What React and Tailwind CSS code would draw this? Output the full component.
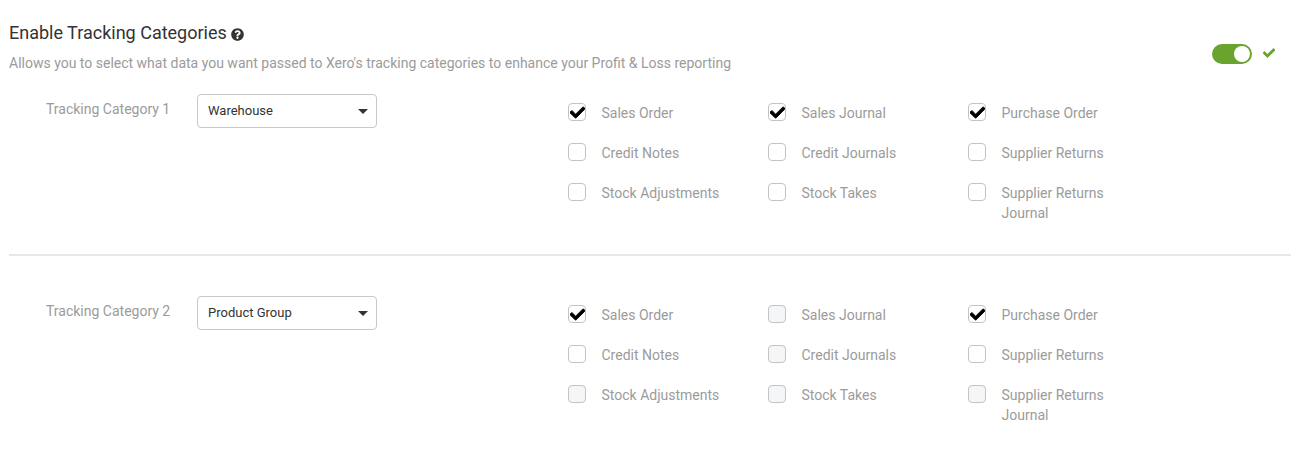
import React from "react";
import { FaCheck, FaQuestionCircle } from "react-icons/fa";

const Box = ({ checked, disabled }) => (
  <span
    className={`flex h-[18px] w-[18px] shrink-0 items-center justify-center rounded-[4px] border border-[#c4c4c4] ${
      disabled ? "bg-[#f5f6f7]" : "bg-white"
    }`}
  >
    {checked && <FaCheck className="shrink-0 stroke-[30px] text-[15px] text-black" />}
  </span>
);

const Option = ({ label, checked, disabled }) => (
  <div className="flex h-10 items-start pt-[9px]">
    <Box checked={checked} disabled={disabled} />
    <span className="ml-[15.5px] w-[120px] text-sm leading-5 text-[#9b9b9b]">{label}</span>
  </div>
);

const Category = ({ title, value, options, className }) => (
  <div className={`flex ${className}`}>
    <div className="w-[188px] pl-[37px] pt-[5px] text-sm leading-5 text-[#9b9b9b]">{title}</div>
    <div className="flex h-[34px] w-[180px] items-center justify-between rounded-[4px] border border-[#c8c8c8] pl-[10px] pr-[8px] text-[13px] text-[#333]">
      {value}
      <span className="h-0 w-0 border-x-[5px] border-t-[5px] border-x-transparent border-t-[#333]" />
    </div>
    <div className="ml-[191px] grid w-[600px] grid-cols-3">
      {options.map((o) => (
        <Option key={o.label} {...o} />
      ))}
    </div>
  </div>
);

const firstOptions = [
  { label: "Sales Order", checked: true },
  { label: "Sales Journal", checked: true },
  { label: "Purchase Order", checked: true },
  { label: "Credit Notes" },
  { label: "Credit Journals" },
  { label: "Supplier Returns" },
  { label: "Stock Adjustments" },
  { label: "Stock Takes" },
  { label: "Supplier Returns Journal" },
];

const secondOptions = [
  { label: "Sales Order", checked: true },
  { label: "Sales Journal", disabled: true },
  { label: "Purchase Order", checked: true },
  { label: "Credit Notes" },
  { label: "Credit Journals", disabled: true },
  { label: "Supplier Returns" },
  { label: "Stock Adjustments", disabled: true },
  { label: "Stock Takes", disabled: true },
  { label: "Supplier Returns Journal", disabled: true },
];

export default function App() {
  return (
    <div className="h-[453px] bg-white pl-[9px] pr-[3px] pt-[20px] font-['Roboto',sans-serif]">
      <div className="flex items-start justify-between">
        <div>
          <div className="flex items-center text-lg leading-[26px] text-[#333]">
            Enable Tracking Categories
            <FaQuestionCircle className="ml-[4px] mt-[2px] text-[13px] text-[#333]" />
          </div>
          <div className="mt-[7px] text-sm leading-5 text-[#9b9b9b]">
            Allows you to select what data you want passed to Xero's tracking categories to enhance your Profit &amp; Loss reporting
          </div>
        </div>
        <div className="mr-[16px] mt-[24px] flex items-center">
          <div className="flex h-5 w-10 items-center justify-end rounded-full bg-[#6aa42f] pr-[2px]">
            <span className="h-4 w-4 rounded-full bg-white" />
          </div>
          <FaCheck className="ml-[11px] mt-[-2px] stroke-[30px] text-[12px] text-[#6aa42f]" />
        </div>
      </div>
      <Category className="mt-[21px]" title="Tracking Category 1" value="Warehouse" options={firstOptions} />
      <div className="mt-[40px] border-t-2 border-[#e8e8e8]" />
      <Category className="mt-[40px]" title="Tracking Category 2" value="Product Group" options={secondOptions} />
    </div>
  );
}
